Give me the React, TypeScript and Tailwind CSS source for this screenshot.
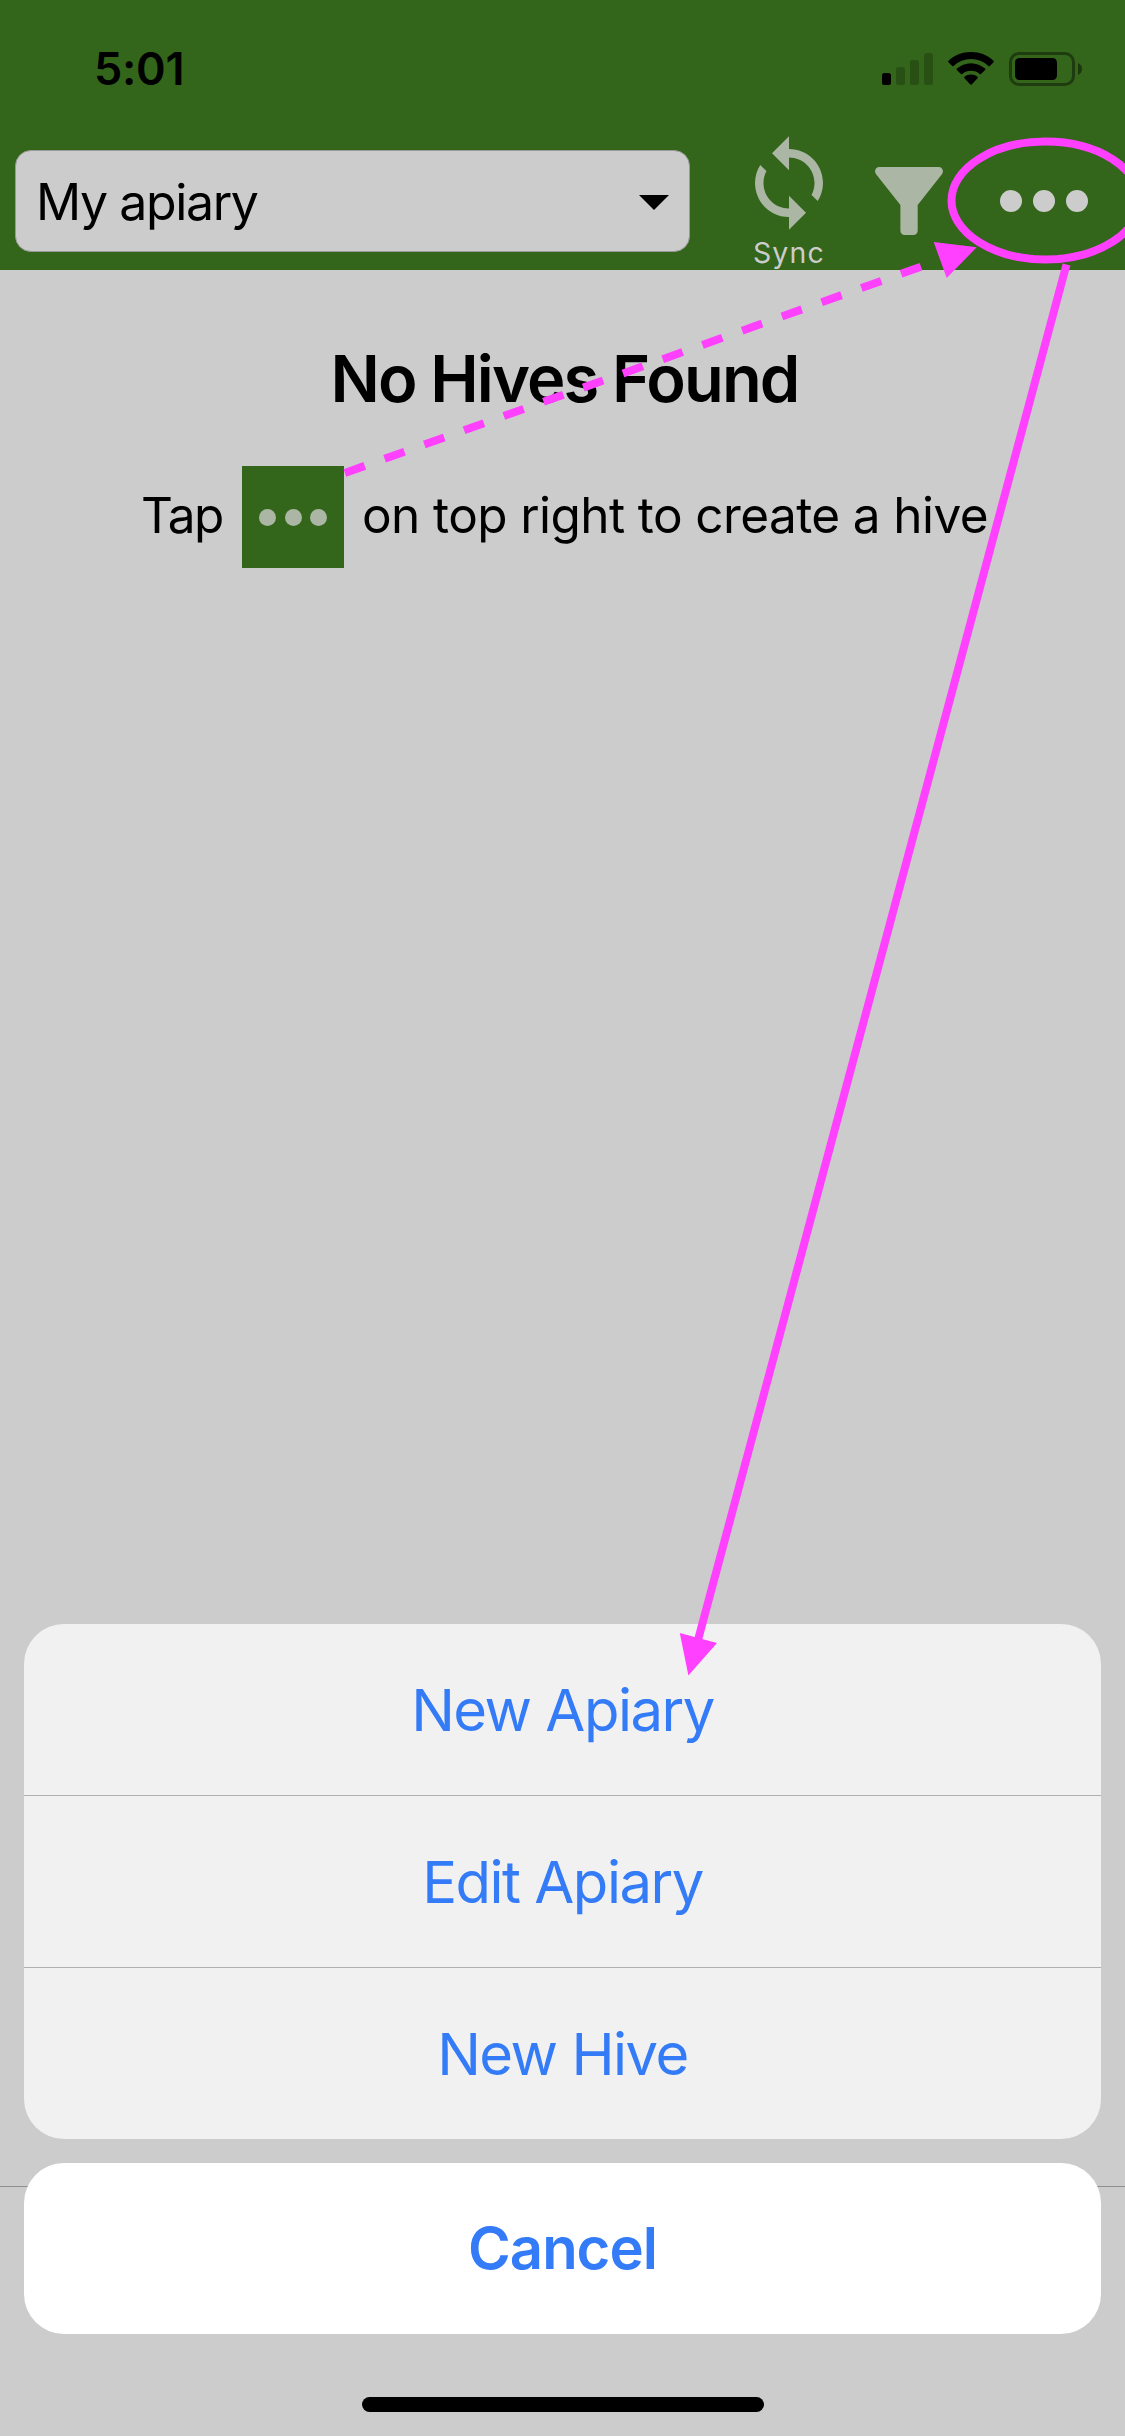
import type { ReactNode } from "react";

function StatusIcons() {
  return (
    <svg width="202" height="36" viewBox="881 51 202 36" className="mt-[51px] shrink-0">
      <rect x="882" y="73" width="9" height="12" rx="2.6" />
      <g fillOpacity="0.2">
        <rect x="896" y="67" width="9" height="18" rx="2.6" />
        <rect x="910" y="60" width="9" height="25" rx="2.6" />
        <rect x="924" y="53" width="9" height="32" rx="2.6" />
      </g>
      <path d="M971 52c8.700 0 16.600 3.300 22.500 8.800q.7.700 0 1.400l-3.700 3.800q-.7.700-1.400 0a25.300 25.300 0 0 0-34.800 0q-.7.700-1.400 0l-3.700-3.800q-.7-.7 0-1.400C954.400 55.300 962.300 52 971 52z" />
      <path d="M971 63.200c5.400 0 10.300 2.100 14.100 5.400q.8.800 0 1.500l-3.800 3.700q-.7.700-1.500.1a13.600 13.600 0 0 0-17.600 0q-.8.600-1.500-.1l-3.800-3.700q-.8-.7 0-1.500c3.800-3.300 8.700-5.400 14.100-5.400z" />
      <path d="M971 74.600c2.500 0 4.700.8 6.400 2.100q.9.700.1 1.500l-5.800 6.200q-.7.700-1.400 0l-5.800-6.200q-.8-.8.100-1.500c1.700-1.300 3.900-2.100 6.400-2.100z" />
      <rect x="1010.500" y="53.500" width="63" height="31" rx="8.500" fill="none" stroke="#000" strokeOpacity="0.4" strokeWidth="3" />
      <path d="M1078 63c2.400 1 4 3.200 4 6s-1.600 5-4 6z" fillOpacity="0.45" />
      <rect x="1015" y="58" width="42" height="22" rx="4.500" />
    </svg>
  );
}

function SyncIcon() {
  return (
    <svg width="102" height="102" viewBox="0 0 24 24" fill="#abb6a4">
      <path d="M12 4V1L8 5l4 4V6c3.310 0 6 2.690 6 6 0 1.010-.25 1.970-.7 2.800l1.460 1.460C19.540 15.030 20 13.570 20 12c0-4.420-3.580-8-8-8zm0 14c-3.310 0-6-2.690-6-6 0-1.010.25-1.970.7-2.800L5.240 7.740C4.460 8.970 4 10.430 4 12c0 4.420 3.580 8 8 8v3l4-4-4-4v3z" />
    </svg>
  );
}

function FunnelIcon() {
  return (
    <svg width="68" height="68" viewBox="0 0 68 68" fill="#abb6a4">
      <path d="M4.300 0h59.400c3.700 0 5.600 4.300 3.200 7.200L42.700 38v25.800a4.200 4.200 0 0 1-4.200 4.200h-8.900a4.200 4.200 0 0 1-4.200-4.200V38L1.100 7.200C-1.300 4.300.6 0 4.300 0z" />
    </svg>
  );
}

function SheetItem({ children, divider }: { children: ReactNode; divider?: boolean }) {
  return (
    <button
      className={
        divider
          ? "flex h-[172px] w-full items-center justify-center border-b border-[#b0b0b0] pt-[2px] text-[58px] tracking-[-1.5px] text-[#347bf7]"
          : "flex h-[171px] w-full items-center justify-center pt-[2px] text-[58px] tracking-[-1.5px] text-[#347bf7]"
      }
    >
      {children}
    </button>
  );
}

/* Pink call-outs drawn over the whole screen. */
function Annotations() {
  return (
    <svg
      className="pointer-events-none absolute inset-0"
      width="1125"
      height="2436"
      viewBox="0 0 1125 2436"
      fill="none"
      stroke="#ff40ff"
      strokeWidth="8"
    >
      <ellipse cx="1045.500" cy="200.500" rx="94" ry="59" />
      <path d="M344.900 473 941 259.500" strokeDasharray="21.100 21.100" />
      <path d="M1066.500 264.500 698 1640" />
      <g fill="#ff40ff" stroke="none">
        <path d="M933.700 242l43 5.300-30 30.700z" />
        <path d="M679.800 1633l37.200 10-28.600 32.500z" />
      </g>
    </svg>
  );
}

export default function App() {
  return (
    <div className="relative flex h-[2436px] w-[1125px] flex-col overflow-hidden bg-[#cccccc] font-['Inter',sans-serif] text-black">
      <header className="flex h-[270px] flex-col bg-[#33651a]">
        <div className="flex h-[132px] justify-between pr-[42px] pl-[94px]">
          <span className="mt-[41px] text-[45px] leading-[56px] font-semibold tracking-[-0.3px]">5:01</span>
          <StatusIcons />
        </div>
        <div className="flex h-[138px] items-start">
          <div className="mt-[18px] ml-[15px] flex h-[102px] w-[675px] items-center justify-between rounded-[16px] border border-[#999999] bg-[#cccccc] pt-[2px] pr-[20px] pl-[20px]">
            <span className="text-[50px] tracking-[-1.4px]">My apiary</span>
            <svg width="30" height="15" viewBox="0 0 30 15" className="mt-[1px]">
              <path d="M0 0h30L15 15z" />
            </svg>
          </div>
          <div className="ml-[48px] flex w-[102px] flex-col items-center">
            <SyncIcon />
            <span className="mt-[2px] text-[28.500px] leading-[34px] tracking-[1.2px] text-[#cccccc]">Sync</span>
          </div>
          <div className="mt-[35px] ml-[35px]">
            <FunnelIcon />
          </div>
          <div className="mt-[58px] ml-[57px] flex gap-[11px]">
            <i className="size-[22px] rounded-full bg-[#cccccc]" />
            <i className="size-[22px] rounded-full bg-[#cccccc]" />
            <i className="size-[22px] rounded-full bg-[#cccccc]" />
          </div>
        </div>
      </header>

      <main className="flex h-[1917px] flex-col items-center border-b border-[#8e8e8e]">
        <h1 className="mt-[69px] pl-[4px] text-[65px] leading-[80px] font-semibold tracking-[-1.85px]">No Hives Found</h1>
        <p className="mt-[47px] flex h-[102px] items-center self-stretch pl-[141px] text-[49.500px] whitespace-nowrap">
          <span className="mb-[4px] w-[81px] tracking-[-1.6px]">Tap</span>
          <span className="mx-[20px] flex size-[102px] items-center justify-center gap-[8.500px] bg-[#33651a]">
            <i className="size-[17px] rounded-full bg-[#abb6a4]" />
            <i className="size-[17px] rounded-full bg-[#abb6a4]" />
            <i className="size-[17px] rounded-full bg-[#abb6a4]" />
          </span>
          <span className="mb-[4px] -ml-[2px] tracking-[-0.6px]">on top right to create a hive</span>
        </p>
      </main>

      <section className="absolute inset-x-[24px] bottom-[24px] flex flex-col items-center">
        <div className="w-full overflow-hidden rounded-[40px] bg-[#f1f1f1]">
          <SheetItem divider>New Apiary</SheetItem>
          <SheetItem divider>Edit Apiary</SheetItem>
          <SheetItem>New Hive</SheetItem>
        </div>
        <button className="mt-[24px] flex h-[171px] w-full items-center justify-center rounded-[40px] bg-white text-[58px] font-semibold tracking-[-1px] text-[#347bf7]">
          Cancel
        </button>
        <div className="mt-[63px] h-[15px] w-[402px] rounded-full bg-black" />
      </section>
      <Annotations />
    </div>
  );
}
